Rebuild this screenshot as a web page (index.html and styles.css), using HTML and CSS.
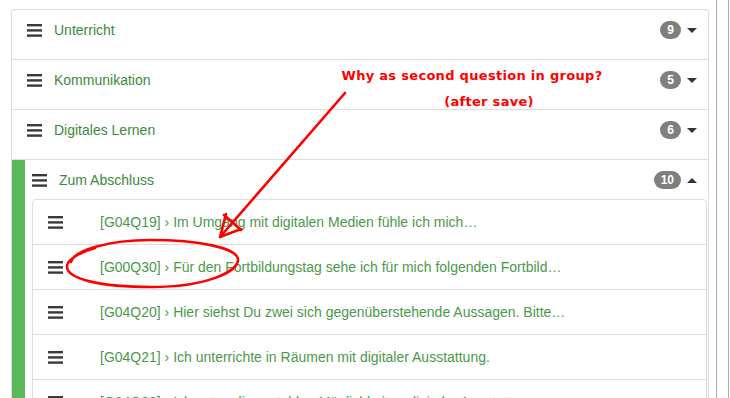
FILE: index.html
```html
<!DOCTYPE html>
<html>
  <head>
    <meta charset="UTF-8" />
    <title>Fragengruppen</title>
    <link rel="stylesheet" href="styles.css">
  </head>
  <body>
    <div class="page">
      <div class="panel">
        <div class="group">
          <div class="group-head">
            <svg class="bars" width="15" height="13" viewBox="0 0 15 13"><rect y="0" width="15" height="2.4" /><rect y="5.2" width="15" height="2.4" /><rect y="10.4" width="15" height="2.4" /></svg>
            <span class="title">Unterricht</span>
            <span class="badge">9</span>
            <span class="caret"></span>
          </div>
        </div>
        <div class="group">
          <div class="group-head">
            <svg class="bars" width="15" height="13" viewBox="0 0 15 13"><rect y="0" width="15" height="2.4" /><rect y="5.2" width="15" height="2.4" /><rect y="10.4" width="15" height="2.4" /></svg>
            <span class="title">Kommunikation</span>
            <span class="badge">5</span>
            <span class="caret"></span>
          </div>
        </div>
        <div class="group">
          <div class="group-head">
            <svg class="bars" width="15" height="13" viewBox="0 0 15 13"><rect y="0" width="15" height="2.4" /><rect y="5.2" width="15" height="2.4" /><rect y="10.4" width="15" height="2.4" /></svg>
            <span class="title">Digitales Lernen</span>
            <span class="badge">6</span>
            <span class="caret"></span>
          </div>
        </div>
        <div class="group open">
          <div class="group-head">
            <svg class="bars" width="15" height="13" viewBox="0 0 15 13"><rect y="0" width="15" height="2.4" /><rect y="5.2" width="15" height="2.4" /><rect y="10.4" width="15" height="2.4" /></svg>
            <span class="title">Zum Abschluss</span>
            <span class="badge">10</span>
            <span class="caret up"></span>
          </div>
          <ul class="questions">
            <li>
              <svg class="bars" width="15" height="13" viewBox="0 0 15 13"><rect y="0" width="15" height="2.4" /><rect y="5.2" width="15" height="2.4" /><rect y="10.4" width="15" height="2.4" /></svg>
              <span class="qtext">[G04Q19] › Im Umgang mit digitalen Medien fühle ich mich…</span>
            </li>
            <li>
              <svg class="bars" width="15" height="13" viewBox="0 0 15 13"><rect y="0" width="15" height="2.4" /><rect y="5.2" width="15" height="2.4" /><rect y="10.4" width="15" height="2.4" /></svg>
              <span class="qtext">[G00Q30] › Für den Fortbildungstag sehe ich für mich folgenden Fortbild…</span>
            </li>
            <li>
              <svg class="bars" width="15" height="13" viewBox="0 0 15 13"><rect y="0" width="15" height="2.4" /><rect y="5.2" width="15" height="2.4" /><rect y="10.4" width="15" height="2.4" /></svg>
              <span class="qtext">[G04Q20] › Hier siehst Du zwei sich gegenüberstehende Aussagen. Bitte…</span>
            </li>
            <li>
              <svg class="bars" width="15" height="13" viewBox="0 0 15 13"><rect y="0" width="15" height="2.4" /><rect y="5.2" width="15" height="2.4" /><rect y="10.4" width="15" height="2.4" /></svg>
              <span class="qtext">[G04Q21] › Ich unterrichte in Räumen mit digitaler Ausstattung.</span>
            </li>
            <li>
              <svg class="bars" width="15" height="13" viewBox="0 0 15 13"><rect y="0" width="15" height="2.4" /><rect y="5.2" width="15" height="2.4" /><rect y="10.4" width="15" height="2.4" /></svg>
              <span class="qtext">[G04Q22] › Ich nutze die portablen Möglichkeiten digitaler Ausstattung.</span>
            </li>
          </ul>
        </div>
      </div>
      <div class="rail"></div>
    </div>

    <!-- annotation drawn on top of the screenshot -->
    <div class="note">
      <div>Why as second question in group?</div>
      <div class="note-sub">(after save)</div>
    </div>
    <svg class="marks" width="730" height="398" viewBox="0 0 730 398">
      <path d="M345 93 L220 237 M220 237 L226 214 M220 237 L241 229 M224 215 L241 230" />
      <path d="M71 262 C74 250 110 240 150 240 C200 240 236 248 238 259 C239 272 205 287 152 287 C100 287 66 279 67 266 C67 260 80 252 95 248" />
    </svg>
  </body>
</html>
```

FILE: styles.css
```css
body {
  margin: 0;
  font-family: "Liberation Sans", Arial, sans-serif;
  font-size: 14px;
  background: white;
  overflow: hidden;
}
.page {
  display: flex;
  align-items: flex-start;
  padding: 9px 0 0 11px;
  height: 389px;
}
.panel {
  width: 696px;
  border: 1px solid #ddd;
  border-bottom: none;
  border-radius: 4px 4px 0 0;
  min-height: 400px;
}
.rail {
  margin-left: 7px;
  width: 11px;
  height: 400px;
  margin-top: -9px;
  border-left: 1px solid #a9a9a9;
  border-right: 1px solid #a9a9a9;
}
.group {
  border-bottom: 1px solid #ddd;
  height: 49px;
}
.group-head {
  display: flex;
  align-items: center;
  height: 20px;
  line-height: 20px;
  padding: 10px 11px 0 15px;
}
.bars {
  flex: none;
  fill: #3a3a3a;
}
.title {
  flex: 1;
  margin-left: 12px;
  color: #3b8a3b;
}
.badge {
  background: #7f7f7f;
  color: white;
  font-size: 12px;
  font-weight: bold;
  line-height: 18px;
  min-width: 6px;
  text-align: center;
  padding: 0 7px;
  border-radius: 10px;
}
.caret {
  width: 0;
  height: 0;
  margin-left: 6px;
  border-left: 5px solid transparent;
  border-right: 5px solid transparent;
  border-top: 5px solid #333;
}
.caret.up {
  border-top: none;
  border-bottom: 5px solid #333;
}
.group.open {
  height: auto;
  border-bottom: none;
  border-left: 13px solid #5cb85c;
}
.group.open .group-head {
  padding-left: 7px;
}
.questions {
  list-style: none;
  margin: 9px 1px 0 7px;
  padding: 0;
  border: 1px solid #ddd;
  border-radius: 4px 4px 0 0;
}
.questions li {
  display: flex;
  align-items: center;
  height: 20px;
  line-height: 20px;
  padding: 12px 15px;
  border-bottom: 1px solid #ddd;
}
.qtext {
  margin-left: 37px;
  color: #4a994a;
  white-space: nowrap;
}
.note {
  position: absolute;
  left: 300px;
  top: 67px;
  width: 344px;
  text-align: center;
  color: #f00;
  font-family: "DejaVu Sans", Verdana, sans-serif;
  font-weight: bold;
  font-size: 13px;
  letter-spacing: 0.3px;
  line-height: 17px;
}
.note-sub {
  margin-top: 9px;
  padding-left: 34px;
}
.marks {
  position: absolute;
  left: 0;
  top: 0;
  fill: none;
  stroke: #f00;
  stroke-width: 2.6;
  stroke-linecap: round;
  stroke-linejoin: round;
}
```
